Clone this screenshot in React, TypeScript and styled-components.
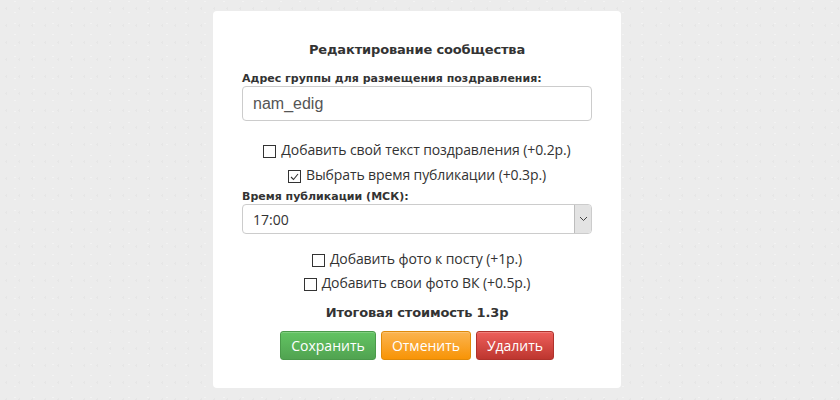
import styled, { createGlobalStyle } from 'styled-components';
import { useState } from 'react';

const GlobalStyle = createGlobalStyle`
  html, body {
    margin: 0;
    padding: 0;
  }
  body {
    background-color: #ececec;
    background-image:
      radial-gradient(rgba(0, 0, 0, 0.025) 1px, transparent 1px),
      radial-gradient(rgba(255, 255, 255, 0.35) 1px, transparent 1px);
    background-size: 13px 17px, 19px 11px;
    background-position: 0 0, 5px 7px;
    min-height: 400px;
  }
`;

const Page = styled.div`
  padding: 11px 6px 0 0;
`;

const Card = styled.div`
  width: 408px;
  box-sizing: border-box;
  margin: 0 auto;
  padding: 30px 29px 28px;
  background: #ffffff;
  border-radius: 4px;
  display: flex;
  flex-direction: column;
  color: #333;
`;

const Title = styled.h3`
  margin: 0 0 12px;
  text-align: center;
  font-family: 'DejaVu Sans', Verdana, sans-serif;
  font-size: 13px;
  font-weight: bold;
  line-height: 18px;
  letter-spacing: -0.15px;
  color: #333;
`;

const Label = styled.label<{ $gapTop?: number }>`
  display: block;
  font-family: 'DejaVu Sans', Verdana, sans-serif;
  font-size: 11px;
  font-weight: bold;
  line-height: 15px;
  margin-top: ${p => p.$gapTop ?? 0}px;
  color: #333;
`;

const TextInput = styled.input`
  box-sizing: border-box;
  width: 100%;
  height: 35px;
  padding: 0 10px;
  border: 1px solid #cccccc;
  border-radius: 4px;
  font-family: 'Liberation Sans', Arial, sans-serif;
  font-size: 16px;
  color: #555;
  outline: none;
`;

const CheckRow = styled.label<{ $gapTop: number }>`
  display: flex;
  align-items: flex-end;
  justify-content: center;
  gap: 5px;
  margin-top: ${p => p.$gapTop}px;
  font-family: 'Open Sans', 'Noto Sans', sans-serif;
  font-size: 14px;
  line-height: 19px;
  letter-spacing: -0.1px;
  color: #333;
  cursor: pointer;
`;

const Box = styled.span`
  width: 11px;
  height: 11px;
  border: 1px solid #333;
  background: #fff;
  margin-bottom: 1px;
  display: flex;
  align-items: center;
  justify-content: center;
  flex-shrink: 0;
`;

const SelectWrap = styled.div`
  height: 30px;
  border: 1px solid #cccccc;
  border-radius: 4px;
  box-sizing: border-box;
  display: flex;
  align-items: center;
  overflow: hidden;
`;

const SelectValue = styled.div`
  flex: 1;
  padding-left: 10px;
  font-family: 'Open Sans', 'Noto Sans', sans-serif;
  font-size: 14px;
  color: #333;
`;

const SelectArrow = styled.div`
  width: 16px;
  height: 100%;
  border-left: 1px solid #bdbdbd;
  background: #e3e3e3;
  display: flex;
  align-items: center;
  justify-content: center;
`;

const Total = styled.div`
  margin-top: 12px;
  text-align: center;
  font-family: 'DejaVu Sans', Verdana, sans-serif;
  font-size: 13px;
  font-weight: bold;
  line-height: 18px;
  letter-spacing: -0.15px;
  color: #333;
`;

const ButtonRow = styled.div`
  display: flex;
  justify-content: center;
  gap: 5px;
  margin-top: 9px;
`;

const palette = {
  green: { top: '#62c462', bottom: '#51a351', border: '#4a9a4a' },
  orange: { top: '#fbb450', bottom: '#f89406', border: '#e08a0a' },
  red: { top: '#ee5f5b', bottom: '#bd362f', border: '#b0322c' },
};

const Button = styled.button<{ $tone: keyof typeof palette; $w: number }>`
  width: ${p => p.$w}px;
  height: 29px;
  padding: 0;
  border: 1px solid ${p => palette[p.$tone].border};
  border-radius: 3px;
  background: linear-gradient(to bottom, ${p => palette[p.$tone].top}, ${p => palette[p.$tone].bottom});
  color: #fff;
  font-family: 'Open Sans', 'Noto Sans', sans-serif;
  font-size: 14px;
  cursor: pointer;
  box-shadow: inset 0 1px 0 rgba(255, 255, 255, 0.2);
`;

const Check = ({ checked }: { checked: boolean }) => (
  <Box>
    {checked && (
      <svg width="9" height="8" viewBox="0 0 9 8">
        <path d="M1 4 L3.5 6.5 L8 1" fill="none" stroke="#333" strokeWidth="1.1" />
      </svg>
    )}
  </Box>
);

const options = [
  { text: 'Добавить свой текст поздравления (+0.2р.)', checked: false },
  { text: 'Выбрать время публикации (+0.3р.)', checked: true },
];

const extras = [
  { text: 'Добавить фото к посту (+1р.)', checked: false },
  { text: 'Добавить свои фото ВК (+0.5р.)', checked: false },
];

export default function App() {
  const [group, setGroup] = useState('nam_edig');

  return (
    <>
      <GlobalStyle />
      <Page>
        <Card>
          <Title>Редактирование сообщества</Title>
          <Label>Адрес группы для размещения поздравления:</Label>
          <TextInput value={group} onChange={e => setGroup(e.target.value)} />

          {options.map((o, i) => (
            <CheckRow key={o.text} $gapTop={i === 0 ? 19 : 6}>
              <Check checked={o.checked} />
              {o.text}
            </CheckRow>
          ))}

          <Label $gapTop={5}>Время публикации (МСК):</Label>
          <SelectWrap>
            <SelectValue>17:00</SelectValue>
            <SelectArrow>
              <svg width="9" height="6" viewBox="0 0 9 6">
                <path d="M1 1 L4.5 4.5 L8 1" fill="none" stroke="#444" strokeWidth="1" />
              </svg>
            </SelectArrow>
          </SelectWrap>

          {extras.map((o, i) => (
            <CheckRow key={o.text} $gapTop={i === 0 ? 15 : 5}>
              <Check checked={o.checked} />
              {o.text}
            </CheckRow>
          ))}

          <Total>Итоговая стоимость 1.3р</Total>

          <ButtonRow>
            <Button $tone="green" $w={96}>Сохранить</Button>
            <Button $tone="orange" $w={90}>Отменить</Button>
            <Button $tone="red" $w={78}>Удалить</Button>
          </ButtonRow>
        </Card>
      </Page>
    </>
  );
}
